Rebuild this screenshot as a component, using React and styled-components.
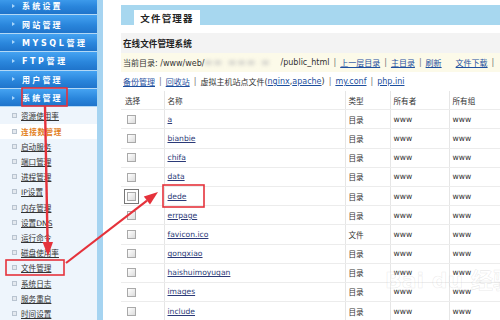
import styled, { createGlobalStyle } from "styled-components";

const GlobalStyle = createGlobalStyle`
  html, body {
    margin: 0;
    padding: 0;
    background: #ffffff;
  }
  body {
    font-family: "DejaVu Sans", "Noto Sans CJK SC", sans-serif;
    color: #333;
  }
`;

const CJK = `"DejaVu Sans", "Noto Sans CJK SC", sans-serif`;

const Page = styled.div`
  position: relative;
  width: 500px;
  height: 320px;
  overflow: hidden;
  display: flex;
  align-items: flex-start;
`;

const Sidebar = styled.aside`
  width: 97px;
  height: 330px;
  margin-top: -3px;
  flex-shrink: 0;
  background: #eef5fc;
  border-right: 6px solid #a6d4f1;
  display: flex;
  flex-direction: column;
`;

const MenuItem = styled.div`
  height: 17.4px;
  display: flex;
  align-items: center;
  gap: 7px;
  padding-left: 12px;
  background: linear-gradient(180deg, #45a3f2 0%, #2a86dc 55%, #1f74cb 100%);
  border-bottom: 1px solid #b3d8f5;
  color: #ffffff;
  font-family: ${CJK};
  font-size: 8px;
  font-weight: bold;
  letter-spacing: ${({ $wide }) => ($wide ? "2.6px" : "2.2px")};
  white-space: nowrap;

  &::before {
    content: "";
    width: 0;
    height: 0;
    border-top: 2.5px solid transparent;
    border-bottom: 2.5px solid transparent;
    border-left: 3px solid #a9d6fb;
  }
`;

const SubMenu = styled.div`
  display: flex;
  flex-direction: column;
  padding-top: 1px;
`;

const SubItem = styled.div`
  height: 15.2px;
  display: flex;
  align-items: center;
  gap: 4px;
  padding-left: 12px;
  font-family: ${CJK};
  font-size: 7.6px;
  white-space: nowrap;
  background: ${({ $active }) => ($active ? "#ffffff" : "transparent")};
  color: ${({ $active }) => ($active ? "#e2801c" : "#333")};
  font-weight: ${({ $active }) => ($active ? "bold" : "normal")};

  &::before {
    content: "";
    width: 3px;
    height: 3px;
    border: 1px solid #b9c4d0;
    background: #e4e9ef;
  }

  span {
    text-decoration: ${({ $active }) => ($active ? "none" : "underline")};
    letter-spacing: ${({ $active }) => ($active ? "0.6px" : "0")};
  }
`;

const Main = styled.main`
  flex: 1;
  margin-left: 18px;
  padding-top: 5px;
  min-width: 0;
  overflow: hidden;
`;

const TopBar = styled.div`
  height: 20px;
  background: #a7d7ef;
  display: flex;
  align-items: flex-end;
  padding-left: 13px;
`;

const Tab = styled.div`
  width: 66px;
  height: 15px;
  background: #ffffff;
  display: flex;
  align-items: center;
  justify-content: center;
  font-family: ${CJK};
  font-size: 9.5px;
  font-weight: bold;
  letter-spacing: 1.2px;
  color: #222;
`;

const TitleRow = styled.div`
  margin-top: 8px;
  height: 20px;
  background: #f3f3f3;
  display: flex;
  align-items: center;
  padding-left: 2px;
  font-family: ${CJK};
  font-size: 8.6px;
  font-weight: bold;
  color: #222;
`;

const Row = styled.div`
  height: 19px;
  display: flex;
  align-items: center;
  padding-left: 2px;
  font-family: ${CJK};
  font-size: 8px;
  white-space: nowrap;
  color: #333;
  background: ${({ $tint }) => $tint || "transparent"};
`;

const Link = styled.a`
  color: ${({ $dark }) => ($dark ? "#2b3a78" : "#1d4f9e")};
  text-decoration: underline;
`;

const Sep = styled.span`
  color: #777;
  margin: 0 4px;
`;

const Gap = styled.span`
  display: inline-block;
  width: ${({ $w }) => $w}px;
`;

const Blurred = styled.span`
  display: inline-block;
  width: 76px;
  color: #bdbdbd;
  filter: blur(2px);
  letter-spacing: 2px;
`;

const Table = styled.table`
  border-collapse: collapse;
  table-layout: fixed;
  width: 408px;
  font-family: ${CJK};
  font-size: 7.6px;
  color: #333;

  th, td {
    height: 18.2px;
    padding: 0 0 0 3px;
    text-align: left;
    font-weight: normal;
    border-bottom: 1px solid #ececec;
    border-left: 1px solid #e6e6e6;
    white-space: nowrap;
  }

  th:first-child, td:first-child {
    border-left: none;
    padding-left: 4px;
  }
`;

const Check = styled.span`
  display: inline-block;
  width: 7px;
  height: 7px;
  margin-left: 2px;
  border: 1px solid #a9a9a9;
  background: linear-gradient(135deg, #ffffff 0%, #dcdcdc 100%);
  vertical-align: middle;
  outline: ${({ $focus }) => ($focus ? "1px solid #777" : "none")};
  outline-offset: 2px;
`;

const Overlay = styled.svg`
  position: absolute;
  left: 0;
  top: 0;
  pointer-events: none;
`;

const Watermark = styled.div`
  position: absolute;
  left: 385px;
  top: 262px;
  font-family: "DejaVu Sans", "Noto Sans CJK SC", sans-serif;
  font-size: 22px;
  font-weight: bold;
  color: rgba(255, 255, 255, 0.2);
  -webkit-text-stroke: 0.6px rgba(160, 160, 160, 0.22);
  pointer-events: none;
  white-space: nowrap;
`;

const menu = [
  { label: "系统设置" },
  { label: "网站管理" },
  { label: "MYSQL管理", wide: true },
  { label: "FTP管理", wide: true },
  { label: "用户管理" },
  { label: "系统管理" },
];

const subMenu = [
  "资源使用率",
  "连接数管理",
  "启动服务",
  "端口管理",
  "进程管理",
  "IP设置",
  "内存管理",
  "设置DNS",
  "运行命令",
  "磁盘使用率",
  "文件管理",
  "系统日志",
  "服务重启",
  "时间设置",
];

const files = [
  { name: "a", type: "目录" },
  { name: "bianbie", type: "目录" },
  { name: "chifa", type: "目录" },
  { name: "data", type: "目录" },
  { name: "dede", type: "目录", focus: true },
  { name: "errpage", type: "目录" },
  { name: "favicon.ico", type: "文件" },
  { name: "gongxiao", type: "目录" },
  { name: "haishuimoyugan", type: "目录" },
  { name: "images", type: "目录" },
  { name: "include", type: "目录" },
];

const RED = "#e5323b";

export default function App() {
  return (
    <>
      <GlobalStyle />
      <Page>
        <Sidebar>
          {menu.map((m) => (
            <MenuItem key={m.label} $wide={m.wide}>
              {m.label}
            </MenuItem>
          ))}
          <SubMenu>
            {subMenu.map((s, i) => (
              <SubItem key={s} $active={i === 1}>
                <span>{s}</span>
              </SubItem>
            ))}
          </SubMenu>
        </Sidebar>

        <Main>
          <TopBar>
            <Tab>文件管理器</Tab>
          </TopBar>
          <TitleRow>在线文件管理系统</TitleRow>
          <Row $tint="#fcfae9">
            当前目录: /www/web/
            <Blurred>▬▬ ▬▬▬ ▬</Blurred>
            /public_html
            <Sep>|</Sep>
            <Link>上一层目录</Link>
            <Sep>|</Sep>
            <Link>主目录</Link>
            <Sep>|</Sep>
            <Link>刷新</Link>
            <Gap $w={14} />
            <Link>文件下载</Link>
            <Sep>|</Sep>
          </Row>
          <Row>
            <Link>备份管理</Link>
            <Sep>|</Sep>
            <Link>回收站</Link>
            <Sep>|</Sep>
            虚拟主机站点文件(<Link>nginx</Link>,<Link>apache</Link>)
            <Sep>|</Sep>
            <Link>my.conf</Link>
            <Sep>|</Sep>
            <Link>php.ini</Link>
          </Row>
          <Table>
            <colgroup>
              <col style={{ width: 43 }} />
              <col style={{ width: 181 }} />
              <col style={{ width: 45 }} />
              <col style={{ width: 59 }} />
              <col style={{ width: 80 }} />
            </colgroup>
            <thead>
              <tr>
                <th>选择</th>
                <th>名称</th>
                <th>类型</th>
                <th>所有者</th>
                <th>所有组</th>
              </tr>
            </thead>
            <tbody>
              {files.map((f) => (
                <tr key={f.name}>
                  <td>
                    <Check $focus={f.focus} />
                  </td>
                  <td>
                    <Link $dark>{f.name}</Link>
                  </td>
                  <td>{f.type}</td>
                  <td>www</td>
                  <td>www</td>
                </tr>
              ))}
            </tbody>
          </Table>
        </Main>

        <Watermark>Bai du 经验</Watermark>

        <Overlay width="500" height="320" viewBox="0 0 500 320">
          <rect x="22" y="88" width="45" height="18" fill="none" stroke={RED} strokeWidth="1.6" />
          <rect x="6" y="260" width="58" height="15" fill="none" stroke={RED} strokeWidth="1.6" />
          <rect x="163" y="185" width="41" height="22" fill="none" stroke={RED} strokeWidth="1.6" />
          <line x1="45" y1="106" x2="47.6" y2="243" stroke={RED} strokeWidth="2.4" />
          <polygon points="42.5,242 53,242 48,256" fill={RED} />
          <line x1="66" y1="263" x2="147" y2="200.6" stroke={RED} strokeWidth="2.2" />
          <polygon points="150,204.6 143.8,196.6 158,192" fill={RED} />
        </Overlay>
      </Page>
    </>
  );
}
